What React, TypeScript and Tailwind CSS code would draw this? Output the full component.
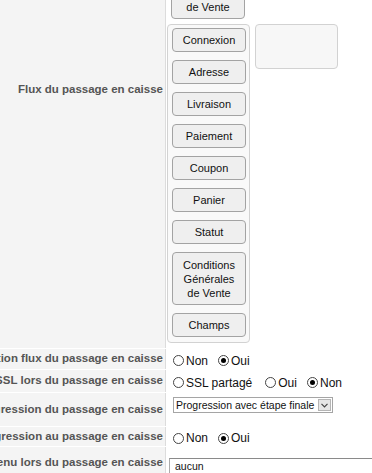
import React from "react";

function Btn({ children, tall }: { children: React.ReactNode; tall?: boolean }) {
  return (
    <div
      className={
        tall
          ? "w-[74px] h-[53px] flex items-center justify-center text-center rounded-[4px] border border-[#a3a3a3] bg-[#efefef] text-[11px] leading-[14px] text-[#111]"
          : "w-[74px] h-[24px] flex items-center justify-center text-center rounded-[4px] border border-[#a3a3a3] bg-[#efefef] text-[11px] leading-[14px] text-[#111]"
      }
    >
      {children}
    </div>
  );
}

function Radio({ label, checked, gap }: { label: string; checked?: boolean; gap?: boolean }) {
  return (
    <span className={gap ? "inline-flex items-center ml-[10px]" : "inline-flex items-center ml-[7px]"}>
      <span className="w-[11px] h-[11px] rounded-full border border-[#444] bg-white flex items-center justify-center">
        {checked && <span className="w-[5px] h-[5px] rounded-full bg-black" />}
      </span>
      <span className="ml-[2px] text-[12px] leading-[14px] text-[#111]">{label}</span>
    </span>
  );
}

function Label({ children }: { children: React.ReactNode }) {
  return (
    <div className="w-[166px] shrink-0 bg-[#f4f4f4] border-r border-[#dcdcdc] flex items-center justify-end overflow-hidden pr-[2px] whitespace-nowrap text-[11.5px] font-bold text-[#555]">
      {children}
    </div>
  );
}

const steps = ["Connexion", "Adresse", "Livraison", "Paiement", "Coupon", "Panier", "Statut"];

export default function App() {
  return (
    <div className="w-[372px] h-[473px] overflow-hidden bg-white font-['Liberation_Sans',Arial,sans-serif]">
      <div className="-mt-[169px] flex flex-col">
        {/* flux */}
        <div className="flex">
          <Label>Flux du passage en caisse</Label>
          <div className="flex-1 pb-[5px]">
            <div className="flex flex-col gap-[8px] pt-[7px] pl-[5px]">
              <Btn>Panier</Btn>
              <Btn>Livraison</Btn>
              <Btn>Paiement</Btn>
              <Btn>Statut</Btn>
              <Btn tall>
                Conditions
                <br />
                Générales
                <br />
                de Vente
              </Btn>
            </div>
            <div className="mt-[5px] ml-[1px] flex items-start gap-[5px]">
              <div className="w-[83px] flex flex-col gap-[8px] pt-[3px] pb-[5px] pl-[4px] pr-[3px] rounded-[4px] border border-[#d2d2d2] bg-[#f9f9f9]">
                {steps.map((s) => (
                  <Btn key={s}>{s}</Btn>
                ))}
                <Btn tall>
                  Conditions
                  <br />
                  Générales
                  <br />
                  de Vente
                </Btn>
                <Btn>Champs</Btn>
              </div>
              <div className="w-[83px] h-[45px] rounded-[4px] border border-[#d2d2d2] bg-[#f7f7f7]" />
            </div>
          </div>
        </div>

        <div className="flex h-[21px] border-t border-white">
          <Label>Activation flux du passage en caisse</Label>
          <div className="flex-1 flex items-center pt-[3px]">
            <Radio label="Non" />
            <Radio label="Oui" checked gap />
          </div>
        </div>

        <div className="flex h-[23px] border-t border-white">
          <Label>Utiliser SSL lors du passage en caisse</Label>
          <div className="flex-1 flex items-center pt-[3px]">
            <Radio label="SSL partagé" />
            <span className="ml-[3px]" />
            <Radio label="Oui" gap />
            <Radio label="Non" checked gap />
          </div>
        </div>

        <div className="flex h-[34px] border-t border-white">
          <Label>Barre de progression du passage en caisse</Label>
          <div className="flex-1 pt-[4px] pl-[7px]">
            <div className="w-[160px] h-[16px] border border-[#a5a5a5] bg-white flex items-center pl-[2px] pr-[1px]">
              <span className="text-[10.5px] leading-[14px] text-[#111] whitespace-nowrap">Progression avec étape finale</span>
              <span className="ml-auto w-[13px] h-[12px] bg-[#e6e6e6] border border-[#b5b5b5] flex items-center justify-center">
                <svg width="7" height="5" viewBox="0 0 7 5">
                  <path d="M0.5 0.8 L3.5 3.8 L6.5 0.8" fill="none" stroke="#444" strokeWidth="1.2" />
                </svg>
              </span>
            </div>
          </div>
        </div>

        <div className="flex h-[20px] border-t border-white">
          <Label>Afficher la progression au passage en caisse</Label>
          <div className="flex-1 flex items-center pt-[3px]">
            <Radio label="Non" />
            <Radio label="Oui" checked gap />
          </div>
        </div>

        <div className="flex h-[33px] border-t border-white">
          <Label>Menu lors du passage en caisse</Label>
          <div className="flex-1 pt-[6px] pl-[3px]">
            <input
              readOnly
              value="aucun"
              className="w-[260px] h-[16px] border border-[#ababab] border-t-[#8a8a8a] bg-white pl-[5px] text-[10.5px] text-[#111] outline-none"
            />
          </div>
        </div>
      </div>
    </div>
  );
}
